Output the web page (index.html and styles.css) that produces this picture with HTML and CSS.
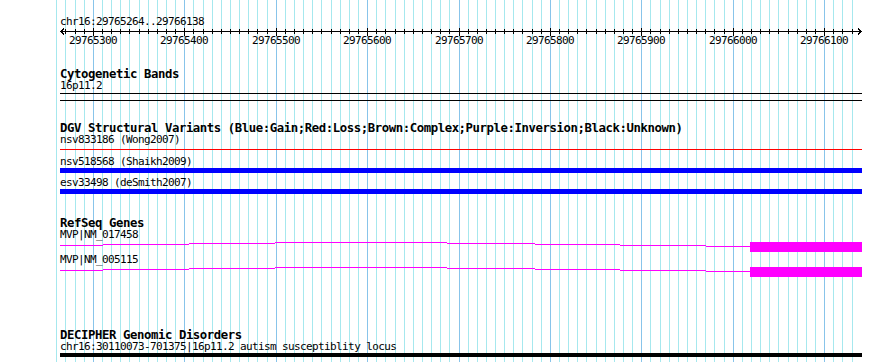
FILE: index.html
```html
<!DOCTYPE html>
<html lang="en">
<head>
    <meta charset="UTF-8">
    <meta name="viewport" content="width=device-width, initial-scale=1.0">
    <title>chr16:29765264..29766138</title>
    <link rel="stylesheet" href="styles.css">
</head>
<body>
    <svg id="grid" class="grid" width="890" height="362"></svg>
    <div class="panel">
        <div class="ruler">
            <div class="label">chr16:29765264..29766138</div>
            <svg id="axis" class="axis" width="802" height="18"></svg>
        </div>

        <div class="track track-cyto">
            <div class="track-title">Cytogenetic Bands</div>
            <div class="label">16p11.2</div>
            <div class="band"></div>
        </div>

        <div class="track track-dgv">
            <div class="track-title">DGV Structural Variants (Blue:Gain;Red:Loss;Brown:Complex;Purple:Inversion;Black:Unknown)</div>
            <div class="label">nsv833186 (Wong2007)</div>
            <div class="cnv loss"></div>
            <div class="label after-loss">nsv518568 (Shaikh2009)</div>
            <div class="cnv gain"></div>
            <div class="label after-gain">esv33498 (deSmith2007)</div>
            <div class="cnv gain"></div>
        </div>

        <div class="track track-refseq">
            <div class="track-title">RefSeq Genes</div>
            <div class="label">MVP|NM_017458</div>
            <svg class="gene" width="802" height="10">
                <rect x="0" y="3" width="43" height="1"/>
                <rect x="43" y="2" width="86" height="1"/>
                <rect x="129" y="1" width="86" height="1"/>
                <rect x="215" y="0" width="172" height="1"/>
                <rect x="387" y="1" width="88" height="1"/>
                <rect x="475" y="2" width="85" height="1"/>
                <rect x="560" y="3" width="86" height="1"/>
                <rect x="646" y="4" width="44" height="1"/>
                <rect x="690" y="0" width="112" height="10"/>
            </svg>
            <div class="label after-gene">MVP|NM_005115</div>
            <svg class="gene" width="802" height="10">
                <rect x="0" y="3" width="43" height="1"/>
                <rect x="43" y="2" width="86" height="1"/>
                <rect x="129" y="1" width="86" height="1"/>
                <rect x="215" y="0" width="172" height="1"/>
                <rect x="387" y="1" width="88" height="1"/>
                <rect x="475" y="2" width="85" height="1"/>
                <rect x="560" y="3" width="86" height="1"/>
                <rect x="646" y="4" width="44" height="1"/>
                <rect x="690" y="0" width="112" height="10"/>
            </svg>
        </div>

        <div class="track track-decipher">
            <div class="track-title">DECIPHER Genomic Disorders</div>
            <div class="label">chr16:30110073-701375|16p11.2 autism susceptiblity locus</div>
            <div class="decipher-bar"></div>
        </div>
    </div>
    <script>
        var START = 29765264;
        var END = 29766138;
        var LEFT = 60;
        var SCALE = 0.914;
        var NS = "http://www.w3.org/2000/svg";

        function xOf(bp){
            return Math.round(LEFT + (bp - START) * SCALE);
        }

        function el(name, attrs){
            var node = document.createElementNS(NS, name);
            for(var k in attrs){
                node.setAttribute(k, attrs[k]);
            }
            return node;
        }

        var oGrid = document.getElementById("grid");
        var oAxis = document.getElementById("axis");

        // 网格线，从起点前的整十位置开始
        for(var bp = Math.floor(START / 10) * 10; bp <= END; bp += 10){
            var x = xOf(bp);
            var major = bp % 100 == 0;
            oGrid.appendChild(el("line", {
                x1: x + 0.5, y1: 0, x2: x + 0.5, y2: 362,
                "class": major ? "major" : "minor"
            }));
            if(bp < START){
                continue;
            }
            // 刻度和数字
            var lx = x - LEFT + 0.5;
            oAxis.appendChild(el("line", {
                x1: lx, y1: major ? 0 : 1, x2: lx, y2: major ? 8 : 6
            }));
            if(major){
                var t = el("text", {x: x - LEFT, y: 16, "text-anchor": "middle"});
                t.textContent = bp;
                oAxis.appendChild(t);
            }
        }

        oAxis.appendChild(el("line", {x1: 0, y1: 3.5, x2: 802, y2: 3.5}));
        oAxis.appendChild(el("polyline", {points: "4,0.5 1,3.5 4,6.5", "class": "arrow"}));
        oAxis.appendChild(el("polyline", {points: "798,0.5 801,3.5 798,6.5", "class": "arrow"}));
    </script>
</body>
</html>
```

FILE: styles.css
```css
*{
    margin: 0;
    padding: 0;
}
body{
    position: relative;
    width: 890px;
    height: 362px;
    background: #fff;
    color: #000;
    overflow: hidden;
}

.grid{
    position: absolute;
    left: 0;
    top: 0;
    z-index: 0;
}
.grid line{
    stroke-width: 1;
    shape-rendering: crispEdges;
}
.grid .minor{
    stroke: #a6e8ee;
}
.grid .major{
    stroke: #88c4ea;
}

.panel{
    position: relative;
    z-index: 1;
    margin-left: 60px;
    width: 802px;
}

/* 6px 一个字 */
.label{
    font: 11px/12px "DejaVu Sans Mono", monospace;
    letter-spacing: -0.62px;
    white-space: nowrap;
}
/* 7px 一个字 */
.track-title{
    font: bold 12.3px/12px "DejaVu Sans Mono", monospace;
    letter-spacing: -0.41px;
    white-space: nowrap;
}

.ruler{
    padding-top: 16px;
}
.axis{
    display: block;
}
.axis line,.axis polyline{
    stroke: #000;
    stroke-width: 1;
    fill: none;
    shape-rendering: crispEdges;
}
.axis text{
    font: 11px "DejaVu Sans Mono", monospace;
    letter-spacing: -0.62px;
    fill: #000;
}

.track-cyto{
    margin-top: 22px;
}
.band{
    margin-top: 1px;
    height: 8px;
    box-sizing: border-box;
    border-top: 1px solid #000;
    border-bottom: 1px solid #000;
}

.track-dgv{
    margin-top: 21px;
}
.cnv.loss{
    margin-top: 3px;
    height: 1px;
    background: #f00;
}
.cnv.gain{
    height: 5px;
    background: #00f;
}
.after-loss{
    margin-top: 6px;
}
.after-gain{
    margin-top: 4px;
}

.track-refseq{
    margin-top: 23px;
}
.gene{
    display: block;
    margin-top: 1px;
    fill: #f0f;
    shape-rendering: crispEdges;
}
.after-gene{
    margin-top: 2px;
}

.track-decipher{
    margin-top: 52px;
}
.decipher-bar{
    height: 4px;
    background: #000;
}
```
